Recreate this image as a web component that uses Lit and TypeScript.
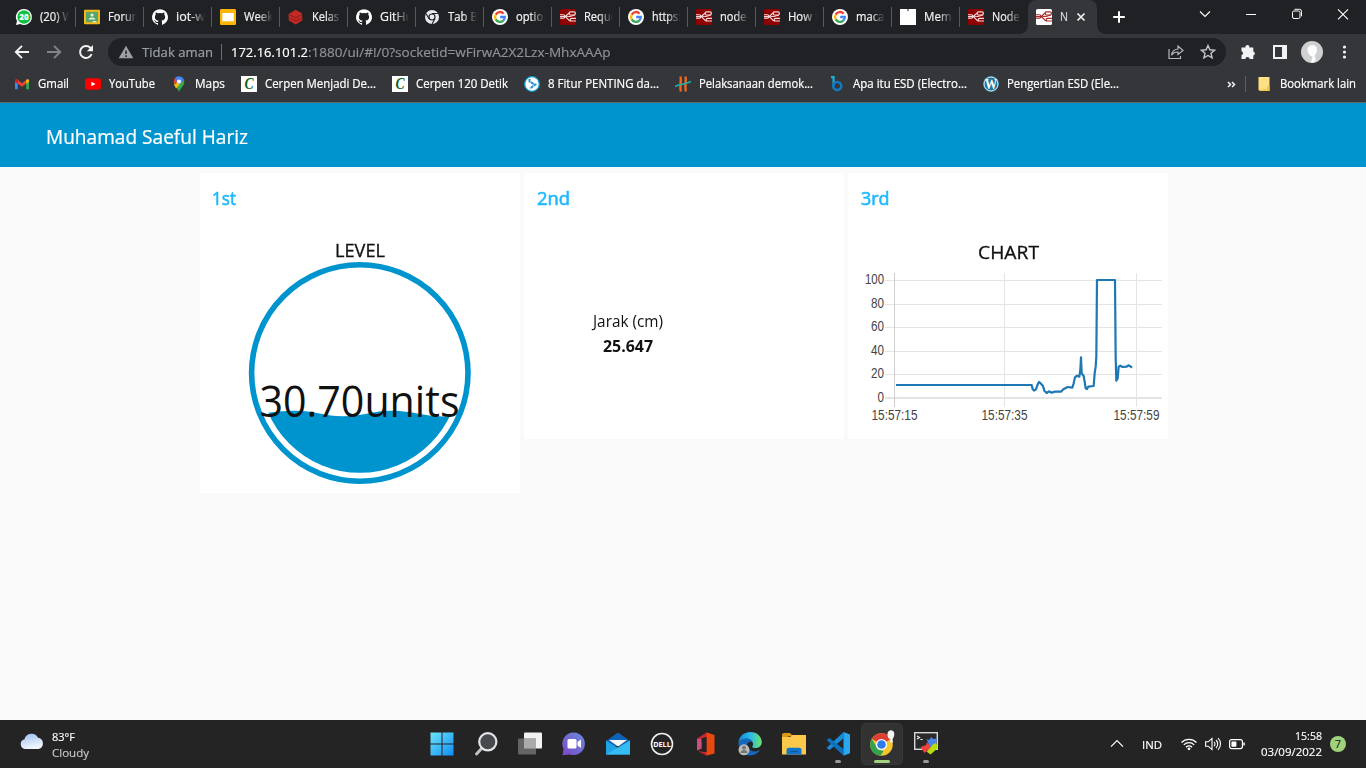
import { LitElement, html, svg, css } from "lit";
import { customElement, property } from "lit/decorators.js";
import { classMap } from "lit/directives/class-map.js";

/** One line of text, set to an exact advance width. */
@customElement("fit-label")
class FitLabel extends LitElement {
  @property() text = "";
  @property({ type: Number }) w = 0;
  static styles = css`
    :host { display: block; flex: none; white-space: nowrap; }
    .run { display: inline-block; transform-origin: 0 50%; vertical-align: top; white-space: pre; }
  `;
  updated() {
    this.style.width = `${this.w}px`;
    const run = this.renderRoot.querySelector(".run") as HTMLElement;
    run.style.transform = "none";
    const natural = run.getBoundingClientRect().width;
    if (natural) run.style.transform = `scaleX(${this.w / natural})`;
  }
  render() {
    return html`<span class="run">${this.text}</span>`;
  }
}

const label = (text: string, w: number, cls = "") =>
  html`<fit-label class=${cls} .text=${text} .w=${w}></fit-label>`;

const icon = (body: unknown, size = 16, box = "0 0 16 16") =>
  html`<svg class="ic" width=${size} height=${size} viewBox=${box}>${body}</svg>`;

const iconStyles = css`
  .ic { display: block; flex: none; overflow: visible; }
`;

const google = svg`<circle cx="8" cy="8" r="8" fill="#fff"/>
  <g fill="none" stroke-width="2.3"><path d="M11.6 4.6A4.9 4.9 0 0 0 3.7 5.6" stroke="#ea4335"/>
  <path d="M3.7 5.6a4.9 4.9 0 0 0 0 4.8" stroke="#fbbc05"/>
  <path d="M3.7 10.4a4.9 4.9 0 0 0 7.6 1.2" stroke="#34a853"/>
  <path d="M11.3 11.6A4.6 4.6 0 0 0 12.8 8H8.2" stroke="#4285f4"/></g>`;
const nodeLines = (bg: string, fg: string) => svg`<rect width="16" height="16" rx="1.5" fill=${bg}/>
  <g fill="none" stroke=${fg} stroke-width="1.15"><path d="M0 7.5h4.500C7 7.500 7 4 10 4M4.500 7.500C8 8 7.500 12 11 12"/>
  <rect x="9" y="2.800" width="6.400" height="3.200" rx="1.500"/><path d="M16 12h-4.500a1.300 1.300 0 0 1 0-2.600H16M0 5.700h3.200a1.500 1.500 0 0 1 0 3.400H0M6 7.300l4 .2 5-1.500"/></g>`;
const nodeRed = nodeLines("#8f0000", "#f3dada");
const github = svg`<path fill="#fff" d="M8 .2a8 8 0 0 0-2.530 15.590c.4.070.550-.170.550-.380v-1.490c-2.230.490-2.700-.950-2.700-.950-.360-.920-.890-1.170-.890-1.170-.730-.5.050-.490.050-.490.810.060 1.230.830 1.230.830.720 1.220 1.880.870 2.340.660.070-.520.280-.870.500-1.070-1.780-.200-3.640-.890-3.640-3.950 0-.870.310-1.590.820-2.150-.080-.200-.360-1.020.080-2.120 0 0 .670-.210 2.200.820a7.700 7.700 0 0 1 4 0c1.530-1.040 2.200-.820 2.200-.820.440 1.100.160 1.920.080 2.120.510.560.820 1.270.820 2.150 0 3.070-1.870 3.750-3.650 3.950.290.250.540.730.540 1.480v2.200c0 .210.150.460.550.380A8 8 0 0 0 8 .2z"/>`;

const whatsapp = svg`<path fill="#fff" d="M8 0a8 8 0 1 1-3.700 15.100L0 16l1-4A8 8 0 0 1 8 0z"/><circle cx="8" cy="8" r="6.700" fill="#12c143"/>
  <text x="8" y="10.800" text-anchor="middle" textLength="9.500" lengthAdjust="spacingAndGlyphs" font-family="Open Sans, sans-serif" font-size="8" font-weight="800" fill="#fff">20</text>`;
const classroom = svg`<rect y=".8" width="16" height="14.400" rx="1" fill="#f9ba18"/><rect x="2" y="2.800" width="12" height="10.400" fill="#57a668"/>
  <g fill="#e3f1e6"><circle cx="8" cy="6" r="1.600"/><path d="M4.600 10.400c0-2.700 6.800-2.700 6.800 0z"/></g><path d="M8.500 13.200h4v-1h-4z" fill="#fff"/>`;
const slides = svg`<rect width="16" height="16" rx="1.300" fill="#fbb400"/><rect x="2.300" y="4" width="11.500" height="8.300" fill="#fff"/>`;
const redCube = svg`<path d="m7.500.8 6.500 3.400.500 7-6.800 4.400L.8 11.400.6 5z" fill="#c22a25"/><path d="m2 6 5.600 2.800L14 5.500M2 9l5.600 3L14 9" fill="none" stroke="#8d1714" stroke-width=".9"/>`;
const chromeMono = svg`<circle cx="8" cy="8" r="7" fill="#e8eaed"/><circle cx="8" cy="8" r="3.600" fill="#202124"/><circle cx="8" cy="8" r="2.400" fill="#e8eaed"/>
  <path d="M8 4.500h6M5 9.700 2 4.500M11 9.800l-3 5.200" stroke="#202124" stroke-width="1.100"/>`;
const blank = svg`<rect width="16" height="16" fill="#fff"/><path d="M7.200 0h1.600v1.500l-.8 1-.8-1z" fill="#777"/>`;

const tabs: [unknown, string, number][] = [
  [whatsapp, "(20) W", 33], [classroom, "Forum", 34], [github, "iot-wa", 36], [slides, "Weekl", 32], [redCube, "Kelas", 27],
  [github, "GitHu", 33], [chromeMono, "Tab Ba", 36], [google, "option", 34], [nodeRed, "Reque", 33], [google, "https:", 29],
  [nodeRed, "node-", 30], [nodeRed, "How t", 31], [google, "macar", 33], [blank, "Mema", 34], [nodeRed, "Node-", 31],
];

const gmail = svg`<path d="M1 3.500v9.700h2.800V7z" fill="#4285f4"/><path d="M15 3.500v9.700h-2.800V7z" fill="#34a853"/><path d="M1 4.200 2.600 3 8 7.200 13.400 3v3.800L8 10.800l-7-5z" fill="#ea4335"/><path d="M12.200 4 13.600 3 15 4v1.700l-2.800 2z" fill="#fbbc04"/><path d="M1 4.200 2.400 3l1.400 1v3.700L1 5.700z" fill="#c5221f"/>`;
const youtube = svg`<rect y="2.300" width="16" height="11.400" rx="3" fill="#f00"/><path d="M6.400 5.700v4.600L10.500 8z" fill="#fff"/>`;
const maps = svg`<path d="M8 16c-.5-3-4.700-5.700-5.200-9.500L8 5l5.300 1C13 10.500 8.700 13 8 16z" fill="#34a853"/><path d="M3 8.500 8.500 2.500l3 3-6.500 7z" fill="#fbbc04"/><path d="M2.800 6.500C2.600 3.200 4 1.500 5.200.9L8.500 4 4 8.600z" fill="#ea4335"/><path d="M5 1c3-2 7-.3 8.100 3L8 8.500 5.500 6z" fill="#4285f4"/><path d="m9 8 4-4c.7 2-.2 4.500-1.500 6z" fill="#34a853"/><circle cx="8" cy="5.600" r="2" fill="#fff"/>`;
const cerpen = svg`<rect width="16" height="16" fill="#fff"/><text x="8" y="13.300" text-anchor="middle" textLength="9" lengthAdjust="spacingAndGlyphs" font-family="Liberation Serif, serif" font-size="16.500" font-style="italic" font-weight="700" fill="#0b6418">C</text>`;
const fitur = svg`<circle cx="8" cy="8" r="7.300" fill="#fff" stroke="#169bd7" stroke-width="1.300"/><path d="M5.500 3v2.600l2 .8M7 6.500l4.300 2L6 12.500" stroke="#168fcd" stroke-width="1.900" stroke-dasharray="3 .7" fill="none"/>`;
const hash = svg`<path d="M5.500.5c1 4-1 10 .3 15M10.500.5c1 4-1 10 .3 15" stroke="#f26a1b" stroke-width="2.300" fill="none"/><path d="M0 10.500C5 8 10 8.500 16 5.500" stroke="#18b2ae" stroke-width="1.500" fill="none"/>`;
const bee = svg`<path d="M2 1.200h2.600V10" fill="none" stroke="#1bb0d8" stroke-width="2.200"/><circle cx="8.200" cy="10" r="4" fill="none" stroke="#1577bd" stroke-width="2.600"/>`;
const wordpress = svg`<circle cx="8" cy="8" r="8" fill="#21759b"/><circle cx="8" cy="8" r="7" fill="none" stroke="#e6f0f4" stroke-width="1"/><text x="8" y="12.800" text-anchor="middle" textLength="12.500" lengthAdjust="spacingAndGlyphs" font-family="Liberation Serif, serif" font-size="14.500" font-weight="700" fill="#fff">W</text>`;
const folder = svg`<path d="M2.500 1h11v14H4l-1.500-1.500z" fill="#ffe082"/><path d="M2.500 13.500H11V10h2.500v5H4z" fill="#f0c64c"/>`;

const bookmarks: [unknown, string, number][] = [
  [gmail, "Gmail", 31], [youtube, "YouTube", 46], [maps, "Maps", 30], [cerpen, "Cerpen Menjadi De...", 111],
  [cerpen, "Cerpen 120 Detik", 92], [fitur, "8 Fitur PENTING da...", 111], [hash, "Pelaksanaan demok...", 114],
  [bee, "Apa itu ESD (Electro...", 114], [wordpress, "Pengertian ESD (Ele...", 112],
];

@customElement("browser-chrome")
class BrowserChrome extends LitElement {
  static styles = [iconStyles, css`
    :host { display: block; height: 103px; color: #fff; font-size: 12px; line-height: 16px; -webkit-text-stroke: 0.200px; }
    .strip { display: flex; height: 34px; background: #202124; padding-left: 8px; box-sizing: border-box; }
    .tab { width: 68px; height: 34px; box-sizing: border-box; padding-left: 8px; display: flex; align-items: center; gap: 8px; }
    .tab.line { background: linear-gradient(#57585c, #57585c) 100% 50% / 1px 20px no-repeat; }
    .title { width: 29px; height: 16px; overflow: hidden; -webkit-mask-image: linear-gradient(90deg, #000 50%, transparent); mask-image: linear-gradient(90deg, #000 50%, transparent); color: #f1f3f4; }
    .active { position: relative; width: 69px; height: 34px; background: #35363a; border-radius: 8px 8px 0 0; box-sizing: border-box; padding-left: 8px; display: flex; align-items: center; }
    .active::before, .active::after { content: ""; position: absolute; bottom: 0; width: 8px; height: 8px; }
    .active::before { left: -8px; background: radial-gradient(circle at 0 0, transparent 7.500px, #35363a 8px); }
    .active::after { right: -8px; background: radial-gradient(circle at 100% 0, transparent 7.500px, #35363a 8px); }
    .n { margin-left: 8px; width: 8px; margin-right: 8px; color: #d7dbe8; }
    .plus { margin: 9px 0 0 14px; }
    .win { margin-left: auto; display: flex; gap: 30px; padding: 6px 15px 0 0; }
    .bar { display: flex; align-items: center; height: 36px; background: #35363a; padding-left: 14px; }
    .nav { display: flex; gap: 16px; }
    .omni { margin-left: 14px; width: 1118px; height: 28px; border-radius: 14px; background: #202124; display: flex; align-items: center; box-sizing: border-box; padding: 0 10px; font-size: 13.500px; line-height: 18px; color: #9aa0a6; }
    .warn { margin-right: 8px; }
    .sep { width: 1px; height: 16px; background: #6b6e73; margin: 0 9px 0 8px; }
    .host { color: #fff; }
    .path { color: #8d9196; }
    .omniIcons { margin-left: auto; display: flex; gap: 16px; }
    .tools { display: flex; align-items: center; margin-left: 14px; gap: 16px; }
    .avatar { margin: 0 -3px; }
    .marks { display: flex; align-items: center; height: 32px; background: #35363a; padding: 0 10px 4px 14px; box-sizing: border-box; gap: 16px; }
    .mark { display: flex; align-items: center; gap: 8px; }
    .more { margin-left: auto; display: flex; align-items: center; }
    .msep { width: 1px; height: 16px; background: #5c5e62; margin: 0 10px 0 9px; }
    .edge { height: 1px; background: #646566; }
  `];
  render() {
    return html`
      <div class="strip">
        ${tabs.map(([ic, t, w], i) => html`<div class=${classMap({ tab: true, line: i < 14 })}>${icon(ic)}<div class="title">${label(t, w)}</div></div>`)}
        <div class="active">${icon(nodeLines("#fff", "#a52a2a"))}<div class="n">${label("N", 8)}</div>
          ${icon(svg`<path d="m1.500 1.500 7 7m0-7-7 7" stroke="#f1f3f4" stroke-width="1.700"/>`, 10, "0 0 10 10")}</div>
        <div class="plus">${icon(svg`<path d="M8 2.200v11.600M2.200 8h11.600" stroke="#fff" stroke-width="2"/>`)}</div>
        <div class="win">
          ${icon(svg`<path d="m3 5.500 5 5 5-5" fill="none" stroke="#fff" stroke-width="1.100"/>`)}
          ${icon(svg`<path d="M3 8.500h10" stroke="#fff"/>`)}
          ${icon(svg`<rect x="3.500" y="5" width="7.500" height="7.500" rx="1.500" fill="none" stroke="#fff"/><path d="M5.500 3.300h5a2 2 0 0 1 2 2v5" fill="none" stroke="#fff"/>`)}
          ${icon(svg`<path d="m3 3.300 10 10m0-10-10 10" stroke="#fff" stroke-width="1.100"/>`)}
        </div>
      </div>
      <div class="bar">
        <div class="nav">
          ${icon(svg`<path d="M15 8H2M8 1.800 1.800 8 8 14.200" fill="none" stroke="#f1f3f4" stroke-width="1.900"/>`)}
          ${icon(svg`<path d="M1 8h13M8 1.800 14.200 8 8 14.200" fill="none" stroke="#828488" stroke-width="1.900"/>`)}
          ${icon(svg`<path d="M13.600 10.200A6 6 0 1 1 12.300 3.700L14 5.400" fill="none" stroke="#f1f3f4" stroke-width="2"/><path d="M15 1v6.200H8.800z" fill="#f1f3f4"/>`)}
        </div>
        <div class="omni">
          <div class="warn">${icon(svg`<path d="M8 1.800 15.300 14.300H.7z" fill="#9aa0a6"/><path d="M8 6.500v3.500M8 11.200v1.700" stroke="#202124" stroke-width="1.500"/>`)}</div>
          ${label("Tidak aman", 71)}<div class="sep"></div>${label("172.16.101.2", 77, "host")}${label(":1880/ui/#!/0?socketid=wFirwA2X2Lzx-MhxAAAp", 302.5, "path")}
          <div class="omniIcons">
            ${icon(svg`<g fill="none" stroke="#b4b8bc" stroke-width="1.200"><path d="M1 5v9.500h11.500V12M10 5V2l5 4.500-5 4V8C7 8 5 9 3.600 11.200 4 7.500 6.500 5.400 10 5z"/></g>`)}
            ${icon(svg`<path d="m8 1.500 1.900 4.300 4.700.4-3.600 3.100 1.100 4.600L8 11.500l-4.100 2.400L5 9.300 1.400 6.200l4.700-.4z" fill="none" stroke="#c4c7ca" stroke-width="1.400"/>`)}
          </div>
        </div>
        <div class="tools">
          ${icon(svg`<path d="M1.500 3.500h4a2 2 0 1 1 3.800 0h4v4a2 2 0 0 1 0 3.900v3.600H9.600a2.100 2.100 0 0 0-4.200 0H1.500v-3.900a2 2 0 0 0 0-3.900z" fill="#f1f3f4"/>`)}
          ${icon(svg`<path d="M1 1h14v14H1zM3 3v10h7V3z" fill="#f1f3f4" fill-rule="evenodd"/>`)}
          <div class="avatar">${icon(svg`<circle cx="11" cy="11" r="11" fill="#d0d0d0"/><path d="M6.500 8.500C6.500 2.500 16 2.500 16 8.500c0 3-1.400 5-2.500 6.500l1.500 3.500-2 3H10l1.500-6C8.500 15 6.500 12 6.500 8.500z" fill="#fbfdff"/>`, 22, "0 0 22 22")}</div>
          ${icon(svg`<g fill="#f1f3f4"><circle cx="8.500" cy="3" r="1.600"/><circle cx="8.500" cy="8" r="1.600"/><circle cx="8.500" cy="13" r="1.600"/></g>`)}
        </div>
      </div>
      <div class="marks">
        ${bookmarks.map(([ic, t, w]) => html`<div class="mark">${icon(ic)}${label(t, w)}</div>`)}
        <div class="more">
          ${icon(svg`<path d="m1 2 2.500 2.500L1 7m4-5 2.500 2.500L5 7" fill="none" stroke="#f1f3f4" stroke-width="1.500"/>`, 9, "0 0 9 9")}
          <div class="msep"></div><div class="mark">${icon(folder)}${label("Bookmark lain", 76)}</div>
        </div>
      </div>
      <div class="edge"></div>`;
  }
}

const yTicks: [string, number, number, number][] = [["100", 280.5, 284, 19], ["80", 304.5, 308, 13], ["60", 327.5, 331, 13], ["40", 351.5, 355, 13], ["20", 374.5, 378, 13], ["0", 398, 401.500, 6.500]];
const xTicks: [string, number, number][] = [["15:57:15", 894.5, 871.500], ["15:57:35", 1004.5, 981.500], ["15:57:59", 1136.5, 1113.500]];
const series = "153,645 560,645 563,657 567,662 573,658 578,643 582,636 588,641 594,648 598,662 605,669 612,664 620,668 630,665 648,665 655,658 668,651 682,653 686,640 690,622 696,617 703,620 706,600 708,562 710,610 716,618 719,635 722,655 726,657 730,650 746,648 749,610 752,590 754,560 756,330 810,330 812,560 814,632 818,625 821,590 826,587 832,591 845,590 850,586 856,589 861,593";

@customElement("node-dashboard")
class NodeDashboard extends LitElement {
  static styles = css`
    :host { display: flex; flex-direction: column; flex: 1; background: #fafafa; color: #111; }
    .header { height: 64px; background: #0094ce; color: #fff; font-size: 19.500px; line-height: 26px; padding: 21px 0 0 46px; box-sizing: border-box; -webkit-text-stroke: 0.200px; }
    .grid { display: grid; grid-template-columns: repeat(3, 320px); gap: 4px; padding: 6px 0 0 200px; align-items: start; }
    .card { background: #fff; height: 266px; display: flex; flex-direction: column; }
    .tall { height: 320px; }
    .name { color: #1fb8ff; font-weight: 500; font-size: 18px; line-height: 24px; padding: 13px 0 0 13px; -webkit-text-stroke: 0.600px; }
    .first { padding-left: 12px; }
    .cap { font-size: 17.500px; font-weight: 500; line-height: 24px; align-self: center; -webkit-text-stroke: 0.300px; }
    .level { margin-top: 28px; height: 22px; }
    .chart { margin-top: 30px; height: 28px; }
    .stat { display: flex; flex-direction: column; align-items: center; width: 208px; padding-top: 99px; font-size: 15.500px; line-height: 25px; }
    .strong { font-weight: 700; }
    .art { display: block; }
    .value { font-family: "Open Sans", sans-serif; font-size: 43px; fill: #111; }
    .tick { font-family: "Liberation Sans", sans-serif; font-size: 13.800px; fill: #444; }
  `;
  render() {
    return html`
      <div class="header">${label("Muhamad Saeful Hariz", 202)}</div>
      <div class="grid">
        <section class="card tall">
          <div class="name first">${label("1st", 24)}</div>
          <div class="cap level">${label("LEVEL", 50)}</div>
          <svg class="art" width="320" height="233" viewBox="200 260 320 233">
            <circle cx="359.800" cy="373" r="108.200" fill="none" stroke="#0094ce" stroke-width="5.600"/>
            <clipPath id="bowl"><circle cx="359.800" cy="373" r="99.800"/></clipPath>
            <path clip-path="url(#bowl)" fill="#0094ce" d="M250 416C270 412 283 410.800 295 410.800 315 410.800 325 416.300 343 416.300 363 416.300 373 410.800 392 410.800 412 410.800 425 416.600 445 416.600H470V480H250z"/>
            <text class="value" x="259.500" y="417" textLength="200" lengthAdjust="spacingAndGlyphs">30.70units</text>
          </svg>
        </section>
        <section class="card">
          <div class="name">${label("2nd", 33)}</div>
          <div class="stat">${label("Jarak (cm)", 70)}${label("25.647", 50, "strong")}</div>
        </section>
        <section class="card">
          <div class="name">${label("3rd", 28.5)}</div>
          <div class="cap chart">${label("CHART", 61)}</div>
          <svg class="art" width="320" height="171" viewBox="848 268 320 171">
            ${yTicks.map(([t, y, b, w]) => svg`<path d="M885 ${y}H1162" stroke="#e4e4e4" stroke-width=${t === "0" ? 2 : 1}/><text class="tick" x=${884 - w} y=${b} textLength=${w} lengthAdjust="spacingAndGlyphs">${t}</text>`)}
            ${xTicks.map(([t, x, l], i) => svg`<path d="M${x} 273V407" stroke=${i ? "#e4e4e4" : "#cfcfcf"}/><text class="tick" x=${l} y="419.500" textLength="46" lengthAdjust="spacingAndGlyphs">${t}</text>`)}
            <polyline transform="translate(845 170) scale(.33333)" points=${series} fill="none" stroke="#1f77b4" stroke-width="6.600" stroke-linejoin="round"/>
          </svg>
        </section>
      </div>`;
  }
}

const apps: [unknown, string][] = [
  [svg`<defs><linearGradient id="w" x2="1" y2="1"><stop stop-color="#6fe5fb"/><stop offset="1" stop-color="#0f8df2"/></linearGradient></defs><path fill="url(#w)" d="M.5.500H11.500V11.500H.500zM12.500.500h11v11h-11zM.5 12.500h11v11H.500zM12.500 12.500h11v11h-11z"/>`, ""],
  [svg`<path d="m2.500 22 6-6.500" stroke="#bfc1c6" stroke-width="3" stroke-linecap="round"/><circle cx="13.800" cy="9.800" r="8.600" fill="#48494c" stroke="#e3e4e8" stroke-width="2.200"/>`, ""],
  [svg`<rect x="6" y=".5" width="18" height="16" rx="1" fill="#f2f2f2"/><rect y="6.500" width="18" height="16" rx="1" fill="#6c6c6c" opacity=".9"/><path d="M6 6.500h12v10H6z" fill="#aaa"/>`, ""],
  [svg`<defs><linearGradient id="t" x1="1" x2="0" y2="1"><stop stop-color="#6a8be0"/><stop offset="1" stop-color="#7a48c4"/></linearGradient></defs><path d="M12 .5a11.300 11.300 0 1 1-4 22L.5 23.200l1-6.200A11.300 11.300 0 0 1 12 .5z" fill="url(#t)"/><rect x="5.500" y="7" width="9" height="9.500" rx="1.500" fill="#fff"/><path d="M15.500 10 19 7.500v8.500l-3.500-2.500z" fill="#fff"/>`, ""],
  [svg`<path d="M0 9 12 .5 24 9v5H0z" fill="#0f63b5"/><path d="M0 8.500 12 16l12-7.500v14H0z" fill="#1fa2e6"/><path d="m0 22.500 24-14v14z" fill="#35bdf3"/><path d="m3 8 9 6.500L21 8z" fill="#f7f7f7"/>`, ""],
  [svg`<circle cx="12" cy="12" r="10.500" fill="none" stroke="#eee" stroke-width="1.600"/><text x="12" y="14.800" text-anchor="middle" textLength="17.500" lengthAdjust="spacingAndGlyphs" font-family="Open Sans, sans-serif" font-size="7.800" font-weight="700" fill="#fff">DELL</text>`, ""],
  [svg`<path d="M3 6.500 12.500.5l4 1.200v20.800l-4 1L4 19.200l8.500.8V5L7.500 6.500v10L3 18.500z" fill="#c6262e"/><path d="M12.500.5 20.500 3v18.500l-8 2z" fill="#e8490f"/><path d="M3 7v11.500l4.500-2V6.700z" fill="#c9507c"/><path d="M7.500 6.500 12.500 5v15H9z" fill="#242424"/>`, ""],
  [svg`<defs><linearGradient id="e"><stop stop-color="#1587dc"/><stop offset=".5" stop-color="#29b9e7"/><stop offset="1" stop-color="#6fe36a"/></linearGradient></defs><path d="M.5 10C2-3 22-3.500 23.800 9.500c.3 6-6.300 7.800-9.300 5.700-1-.7 1-1.500.5-3.700C14 7 7 4.500.5 10z" fill="url(#e)"/><path d="M.5 10C6 4.500 13 6.500 14.500 10 9 9 8 13 10.500 16.500c3 4 8 3.500 11.500 1.500C17 26.500 0 26 .5 10z" fill="#1668bd"/><circle cx="6" cy="17.800" r="5.500" fill="#bcbcbc"/><circle cx="6" cy="15.800" r="2" fill="#777"/><path d="M2.500 21c0-4 7-4 7 0z" fill="#777"/>`, ""],
  [svg`<path d="M0 3a2 2 0 0 1 2-2h6l3 3h-2L0 6z" fill="#dc9a10"/><path d="M0 5h8l2.500-2H24v19.500H0z" fill="#fcc94a"/><path d="M4.500 22.500V18a2.300 2.300 0 0 1 2.300-2.300h10.400a2.300 2.300 0 0 1 2.300 2.300v4.500z" fill="#1277cb"/><path d="M8 19.500h8" stroke="#0b58a0" stroke-width="1.300"/>`, ""],
  [svg`<path d="M17.500 0v6.500L3.500 18 .5 16z" fill="#1a8ad4"/><path d="M17.500 23.500V17L3.500 6 .5 8z" fill="#0d72bb"/><path d="M17.500 0 24 2.500v18.700l-6.500 2.500z" fill="#2ba7f0"/>`, "dot"],
  [svg`<circle cx="11.500" cy="12.500" r="11.300" fill="#f7c52f"/><path d="M11.500 12.500 1.700 6.800a11.300 11.300 0 0 1 19.600 0z" fill="#dd4033"/><path d="M1.700 6.800 8 17.500l5.500 1.500-3 4.800A11.300 11.300 0 0 1 1.700 6.800z" fill="#31a350"/><circle cx="11.500" cy="12.500" r="5.600" fill="#fff"/><circle cx="11.500" cy="12.500" r="4.300" fill="#2c7cec"/><path d="M17.500 2c0-5 7-5 6.800 0 0 3-1.300 4-1.800 5.500l.5 3h-3L20.500 7c-2 0-3-2-3-5z" fill="#f5f5f5"/>`, "run"],
  [svg`<rect x=".7" y=".7" width="22.600" height="16.600" fill="#2a2a2a" stroke="#d9d9d9" stroke-width="1.400"/><path d="m3 4 2.500 1.500L3 7M6.500 7.500h2" stroke="#fff" stroke-width="1.100" fill="none"/><path d="m6.500 15 5.500-2 1-3 3 3 2 3-4 2-3.500 3z" fill="#f0413c"/><path d="m12.500 7 2.500 1 2.500-3 1.500 2 4-.5-1 5-3 1-3 3-1.500-4z" fill="#4b86ea"/><path d="m18.500 12.500 3.500-1.500 2 5-7.500 6.500-4-3 2.500-2z" fill="#b8dc12"/>`, "dot"],
];

@customElement("task-bar")
class TaskBar extends LitElement {
  static styles = [iconStyles, css`
    :host { display: flex; height: 48px; background: #242424; color: #fff; font-size: 11.500px; line-height: 16px; }
    .weather { width: 419.500px; display: flex; box-sizing: border-box; padding: 9px 0 0 20px; gap: 8px; flex: none; -webkit-text-stroke: 0.150px; }
    .cloud { margin: 3px 0 0; width: 24px; }
    .dim { color: #c8c8c8; }
    .apps { display: flex; align-items: center; }
    .cell { width: 44px; height: 48px; display: flex; flex-direction: column; align-items: center; justify-content: center; box-sizing: border-box; position: relative; }
    .run { width: 40px; height: 40px; margin: 4px 2px; background: #323232; border-radius: 4px; box-shadow: 0 0 0 1px #383838; }
    .dot::after { content: ""; position: absolute; bottom: 5px; width: 6px; height: 3px; border-radius: 2px; background: #9a9a9a; }
    .run::after { content: ""; position: absolute; bottom: 1px; width: 16px; height: 3px; border-radius: 2px; background: #a3d17f; }
    .tray { margin-left: auto; display: flex; align-items: center; padding-right: 20px; -webkit-text-stroke: 0.150px; }
    .time { display: flex; flex-direction: column; align-items: flex-end; margin: 0 8px 0 16px; }
    .lang { margin: 1px 19px 0 17px; }
    .sys { display: flex; gap: 8px; }
  `];
  render() {
    return html`
      <div class="weather">
        <div class="cloud"><svg class="ic" width="24" height="17" viewBox="0 0 24 17"><defs><linearGradient id="c" x2=".3" y2="1"><stop stop-color="#9dbdf0"/><stop offset="1" stop-color="#f0f5fd"/></linearGradient></defs><path d="M5 17a5 5 0 0 1-.5-9.800A7.200 7.200 0 0 1 18 5.800 5.700 5.700 0 0 1 18.500 17z" fill="url(#c)"/></svg></div>
        <div>${label("83°F", 23)}${label("Cloudy", 37, "dim")}</div>
      </div>
      <div class="apps">${apps.map(([ic, c]) => html`<div class="cell ${c}">${icon(ic, 24, "0 0 24 24")}</div>`)}</div>
      <div class="tray">
        ${icon(svg`<path d="m2 10.700 6-6 6 6" fill="none" stroke="#fff" stroke-width="1.200"/>`)}
        <div class="lang">${label("IND", 20)}</div>
        <div class="sys">
          ${icon(svg`<g fill="none" stroke="#fff" stroke-width="1.300"><path d="M.5 6.500a10.500 10.500 0 0 1 15 0M2.800 8.900a7.300 7.300 0 0 1 10.400 0M5 11.200a4.200 4.200 0 0 1 6 0"/></g><circle cx="8" cy="12.800" r="1.400" fill="#fff"/>`)}
          ${icon(svg`<g fill="none" stroke="#fff" stroke-width="1.100"><path d="M.6 5.800h2.600L7 2.400v11.200l-3.800-3.400H.600zM9 5.800a3 3 0 0 1 0 4.400M11 4a5.600 5.600 0 0 1 0 8M13 2.200a8 8 0 0 1 0 11.600"/></g>`)}
          ${icon(svg`<rect x=".6" y="3.600" width="12.800" height="9" rx="2" fill="none" stroke="#fff" stroke-width="1.200"/><rect x="2.400" y="5.400" width="5" height="5.400" rx=".7" fill="#fff"/><path d="M14.300 6.500h1.500v3h-1.500z" fill="#fff"/>`)}
        </div>
        <div class="time">${label("15:58", 27)}${label("03/09/2022", 61)}</div>
        ${icon(svg`<circle cx="8" cy="8" r="8" fill="#a0d27c"/><text x="8" y="12" text-anchor="middle" font-family="Open Sans, sans-serif" font-size="11" fill="#111">7</text>`)}
      </div>`;
  }
}

@customElement("app-root")
class AppRoot extends LitElement {
  static styles = css`
    :host { display: flex; flex-direction: column; width: 1366px; height: 768px; overflow: hidden; font-family: "Open Sans", "Noto Sans", sans-serif; }
  `;
  render() {
    return html`<browser-chrome></browser-chrome><node-dashboard></node-dashboard><task-bar></task-bar>`;
  }
}
